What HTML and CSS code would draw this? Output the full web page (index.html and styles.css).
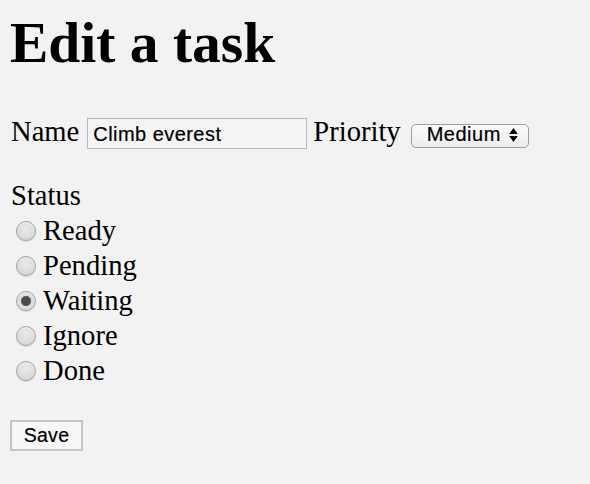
FILE: index.html
```html
<!DOCTYPE html>
<html>
<head>
<meta charset="utf-8">
<link rel="stylesheet" href="styles.css">
</head>
<body>
<main class="page">
  <h1 class="title">Edit a task</h1>
  <form class="task-form">
    <div class="field-row">
      <label class="label" for="name">Name</label>
      <input class="text-input" id="name" type="text" value="Climb everest">
      <label class="label label-priority" for="priority">Priority</label>
      <span class="select-wrap">
        <select class="select" id="priority">
          <option>Low</option>
          <option selected>Medium</option>
          <option>High</option>
        </select>
        <svg class="select-arrows" width="9" height="14" viewBox="0 0 9 14"><path d="M4.5 0 L8.8 6 L0.2 6 Z M4.5 14 L8.8 8 L0.2 8 Z" fill="#000"/></svg>
      </span>
    </div>
    <fieldset class="status">
      <div class="status-title">Status</div>
      <label class="radio-row"><input class="radio" type="radio" name="status"><span>Ready</span></label>
      <label class="radio-row"><input class="radio" type="radio" name="status"><span>Pending</span></label>
      <label class="radio-row"><input class="radio" type="radio" name="status" checked><span>Waiting</span></label>
      <label class="radio-row"><input class="radio" type="radio" name="status"><span>Ignore</span></label>
      <label class="radio-row"><input class="radio" type="radio" name="status"><span>Done</span></label>
    </fieldset>
    <button class="save" type="button">Save</button>
  </form>
</main>
</body>
</html>
```
FILE: styles.css
```css
html, body {
  margin: 0;
  padding: 0;
  background: #f2f2f2;
}
body {
  font-family: "Liberation Serif", "Times New Roman", serif;
  color: #000;
}
.page {
  padding: 10px 0 0 10px;
}
.title {
  margin: 0;
  font-size: 57.5px;
  line-height: 65px;
  font-weight: bold;
}
.task-form {
  margin: 41px 0 0 0;
}
.field-row {
  display: flex;
  align-items: baseline;
  font-size: 28.6px;
  line-height: 32px;
}
.label {
  padding-left: 1px;
}
.text-input {
  box-sizing: border-box;
  width: 220px;
  height: 31px;
  margin-left: 8px;
  padding: 4px 5px 2px 5px;
  border: 1px solid #b9b9b9;
  background: #f4f4f4;
  font-family: "Liberation Sans", Arial, sans-serif;
  font-size: 20px;
  letter-spacing: 0.45px;
  color: #000;
  outline: none;
  -webkit-text-stroke: 0.2px #000;
}
.label-priority {
  margin-left: 5px;
}
.select-wrap {
  position: relative;
  display: inline-flex;
  margin-left: 10px;
}
.select {
  -webkit-appearance: none;
  appearance: none;
  box-sizing: border-box;
  width: 118px;
  height: 24px;
  padding: 0 0 3px 15px;
  border: 1.5px solid #9c9c9c;
  border-radius: 5px;
  background: linear-gradient(#fbfbfb, #ededed);
  font-family: "Liberation Sans", Arial, sans-serif;
  font-size: 20px;
  letter-spacing: 0.5px;
  line-height: 19px;
  color: #000;
  outline: none;
  -webkit-text-stroke: 0.2px #000;
}
.select-arrows {
  position: absolute;
  right: 11px;
  top: 4px;
  pointer-events: none;
}
.status {
  margin: 29px 0 0 0;
  padding: 0;
  border: 0;
  font-size: 28.6px;
  line-height: 35px;
}
.status-title {
  padding-left: 1px;
}
.radio-row {
  display: flex;
  align-items: center;
  height: 35px;
}
.radio {
  -webkit-appearance: none;
  appearance: none;
  box-sizing: border-box;
  width: 20px;
  height: 20px;
  margin: 1px 7px 0 6px;
  border-radius: 50%;
  border: 1px solid #a3a3a3;
  background: radial-gradient(circle at 50% 35%, #e9e9e9 0%, #dcdcdc 60%, #cfcfcf 100%);
  box-shadow: 0 1px 1px rgba(0,0,0,0.12), inset 0 1px 1px rgba(255,255,255,0.6);
}
.radio:checked {
  background: radial-gradient(circle, #4b4b4b 0, #4b4b4b 4px, #6a6a6a 4.8px, #dedede 5.5px, #d6d6d6 100%);
}
.save {
  display: block;
  box-sizing: border-box;
  width: 73px;
  height: 31px;
  margin: 32px 0 0 0;
  padding: 0;
  border: 2px solid #c4c4c4;
  background: #f7f7f7;
  font-family: "Liberation Sans", Arial, sans-serif;
  font-size: 19.5px;
  letter-spacing: 0.3px;
  color: #000;
  -webkit-text-stroke: 0.2px #000;
}
```
